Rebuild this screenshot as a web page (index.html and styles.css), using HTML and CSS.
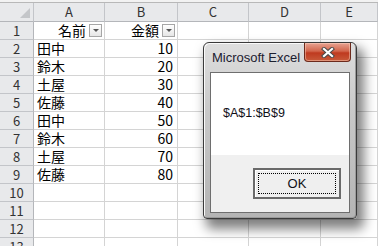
FILE: index.html
```html
<!DOCTYPE html>
<html lang="ja">
  <head>
    <meta charset="UTF-8" />
    <title>Excel - MsgBox</title>
    <link rel="stylesheet" href="styles.css">
  </head>
  <body>
    <div class="sheet">
      <div class="topbar"></div>
      <div class="row head">
        <div class="corner"><span class="tri"></span></div>
        <div class="colhead">A</div>
        <div class="colhead">B</div>
        <div class="colhead">C</div>
        <div class="colhead">D</div>
        <div class="colhead">E</div>
      </div>
      <div class="row">
        <div class="rowhead">1</div>
        <div class="cell filter"><span>名前</span><i class="drop"></i></div>
        <div class="cell filter"><span>金額</span><i class="drop"></i></div>
        <div class="cell"></div><div class="cell"></div><div class="cell"></div>
      </div>
      <div class="row">
        <div class="rowhead">2</div>
        <div class="cell">田中</div><div class="cell num">10</div>
        <div class="cell"></div><div class="cell"></div><div class="cell"></div>
      </div>
      <div class="row">
        <div class="rowhead">3</div>
        <div class="cell">鈴木</div><div class="cell num">20</div>
        <div class="cell"></div><div class="cell"></div><div class="cell"></div>
      </div>
      <div class="row">
        <div class="rowhead">4</div>
        <div class="cell">土屋</div><div class="cell num">30</div>
        <div class="cell"></div><div class="cell"></div><div class="cell"></div>
      </div>
      <div class="row">
        <div class="rowhead">5</div>
        <div class="cell">佐藤</div><div class="cell num">40</div>
        <div class="cell"></div><div class="cell"></div><div class="cell"></div>
      </div>
      <div class="row">
        <div class="rowhead">6</div>
        <div class="cell">田中</div><div class="cell num">50</div>
        <div class="cell"></div><div class="cell"></div><div class="cell"></div>
      </div>
      <div class="row">
        <div class="rowhead">7</div>
        <div class="cell">鈴木</div><div class="cell num">60</div>
        <div class="cell"></div><div class="cell"></div><div class="cell"></div>
      </div>
      <div class="row">
        <div class="rowhead">8</div>
        <div class="cell">土屋</div><div class="cell num">70</div>
        <div class="cell"></div><div class="cell"></div><div class="cell"></div>
      </div>
      <div class="row">
        <div class="rowhead">9</div>
        <div class="cell">佐藤</div><div class="cell num">80</div>
        <div class="cell"></div><div class="cell"></div><div class="cell"></div>
      </div>
      <div class="row">
        <div class="rowhead">10</div>
        <div class="cell"></div><div class="cell"></div>
        <div class="cell"></div><div class="cell"></div><div class="cell"></div>
      </div>
      <div class="row">
        <div class="rowhead">11</div>
        <div class="cell"></div><div class="cell"></div>
        <div class="cell"></div><div class="cell"></div><div class="cell"></div>
      </div>
      <div class="row">
        <div class="rowhead">12</div>
        <div class="cell"></div><div class="cell"></div>
        <div class="cell"></div><div class="cell"></div><div class="cell"></div>
      </div>
      <div class="row">
        <div class="rowhead">13</div>
        <div class="cell"></div><div class="cell"></div>
        <div class="cell"></div><div class="cell"></div><div class="cell"></div>
      </div>
    </div>

    <div class="dialog">
      <div class="titlebar">
        <span class="title">Microsoft Excel</span>
        <div class="close">
          <svg width="14" height="11" viewBox="0 0 14 11">
            <path d="M3 2 L11 9 M11 2 L3 9" stroke="#4a4a4a" stroke-width="4.2" stroke-linecap="square" fill="none"/>
            <path d="M3 2 L11 9 M11 2 L3 9" stroke="#fff" stroke-width="2.2" stroke-linecap="square" fill="none"/>
          </svg>
        </div>
      </div>
      <div class="client">
        <div class="message">$A$1:$B$9</div>
        <div class="buttons">
          <div class="ok"><span class="focus">OK</span></div>
        </div>
      </div>
    </div>
  </body>
</html>
```

FILE: styles.css
```css
html, body {
  margin: 0;
  padding: 0;
  overflow: hidden;
}
body {
  width: 378px;
  height: 246px;
  background-color: #fff;
  font-family: "Noto Sans CJK JP", "Liberation Sans", sans-serif;
  position: relative;
}
.topbar {
  height: 3px;
  background-color: #f2f2f2;
  border-bottom: 1px solid #b8b8b8;
  box-sizing: border-box;
}
.row {
  display: grid;
  grid-template-columns: 34px 71px 73px 71px 72px 57px;
  height: 18px;
}
.row.head {
  height: 19px;
}
.row > div {
  box-sizing: border-box;
  border-right: 1px solid #d4d4d4;
  border-bottom: 1px solid #d4d4d4;
  white-space: nowrap;
}
.corner, .colhead, .rowhead {
  background-color: #e8e9eb;
}
.row > .corner,
.row > .colhead {
  border-right: 1px solid #c3c5c9;
  border-bottom: 1px solid #b4b6ba;
}
.corner {
  position: relative;
}
.corner .tri {
  position: absolute;
  right: 3px;
  bottom: 3px;
  width: 0;
  height: 0;
  border-left: 10px solid transparent;
  border-bottom: 10px solid #c4c6c9;
}
.colhead {
  text-align: center;
  font-size: 13px;
  line-height: 18px;
  color: #333;
}
.row > .rowhead {
  border-right: 1px solid #b4b6ba;
  border-bottom: 1px solid #c3c5c9;
  text-align: center;
  font-size: 13px;
  line-height: 17px;
  color: #333;
}
.cell {
  font-size: 14px;
  line-height: 17px;
  padding: 0 3px;
  color: #000;
}
.cell.num {
  text-align: right;
  padding-right: 4px;
}
.cell.filter {
  display: flex;
  justify-content: flex-end;
  align-items: center;
  gap: 3px;
  padding-right: 2px;
}
.drop {
  display: block;
  width: 13px;
  height: 13px;
  box-sizing: border-box;
  border: 1px solid #a6a6a6;
  background: linear-gradient(#ffffff, #e6e6e6);
  position: relative;
}
.drop::after {
  content: "";
  position: absolute;
  left: 3px;
  top: 4px;
  border-left: 3px solid transparent;
  border-right: 3px solid transparent;
  border-top: 3px solid #555;
}

/* message box */
.dialog {
  position: absolute;
  left: 203px;
  top: 42px;
  width: 154px;
  height: 177px;
  box-sizing: border-box;
  border: 1px solid #3a3a3a;
  border-radius: 6px 6px 4px 4px;
  background: linear-gradient(#dedede, #c8c8c8 40%, #b4b4b4);
  box-shadow: inset 1px 1px 0 #fafafa, inset -1px -1px 0 #9a9a9a,
    5px 8px 12px 2px rgba(0, 0, 0, 0.5);
  padding: 0 6px 5px 6px;
  font-family: "Liberation Sans", Arial, sans-serif;
}
.titlebar {
  height: 29px;
  position: relative;
}
.title {
  position: absolute;
  left: 2px;
  top: 7px;
  font-size: 13px;
  color: #1c2030;
}
.close {
  position: absolute;
  right: -1px;
  top: 0;
  width: 47px;
  height: 19px;
  box-sizing: border-box;
  border: 1px solid #6c2a1c;
  border-top: none;
  border-radius: 0 0 4px 4px;
  background: linear-gradient(#e7a392, #d2664c 45%, #bf3a1f 55%, #c85a3a);
  box-shadow: inset 0 0 0 1px rgba(255, 220, 200, 0.45);
  display: flex;
  align-items: center;
  justify-content: center;
}
.client {
  height: 141px;
  box-sizing: border-box;
  border: 1px solid #6e6e6e;
  display: flex;
  flex-direction: column;
}
.message {
  height: 82px;
  background-color: #fff;
  font-size: 12.5px;
  color: #101018;
  padding: 33px 0 0 12px;
  box-sizing: border-box;
}
.buttons {
  flex: 1;
  background-color: #f0f0f0;
  padding: 13px 0 0 42px;
}
.ok {
  width: 88px;
  height: 31px;
  box-sizing: border-box;
  border: 2px solid #6a6a6a;
  background-color: #efefef;
  box-shadow: inset 1px 1px 0 #fff;
  padding: 3px;
}
.ok .focus {
  display: flex;
  height: 100%;
  box-sizing: border-box;
  border: 1px dotted #000;
  align-items: center;
  justify-content: center;
  font-size: 13px;
  color: #101018;
}
```
